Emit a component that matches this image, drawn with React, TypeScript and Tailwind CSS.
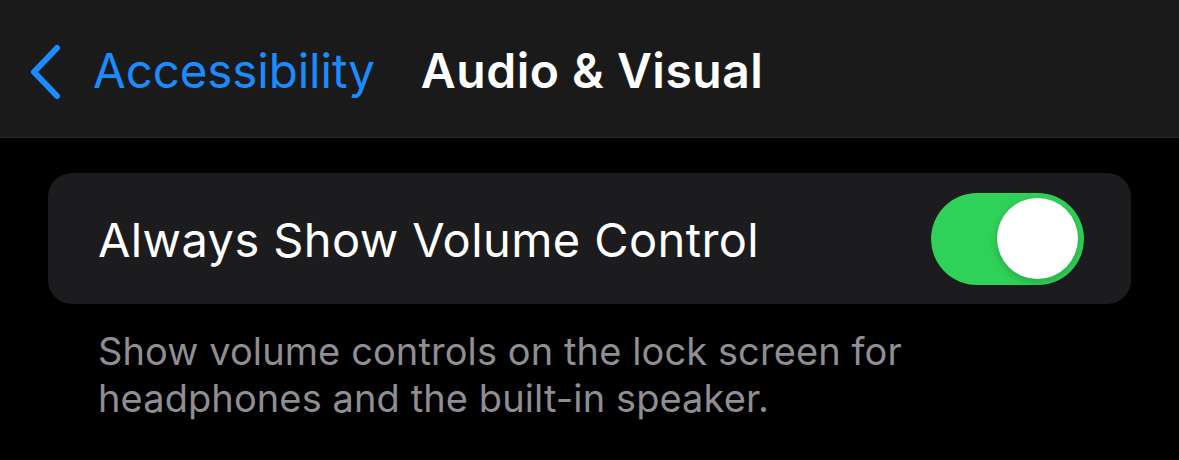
export default function App() {
  return (
    <main
      className="h-[460px] w-[1179px] overflow-hidden bg-black text-white"
      style={{ fontFamily: "Inter, 'Noto Sans', sans-serif" }}
    >
      <header className="flex h-[138px] items-center border-b border-[#2c2c2e] bg-[#1a1a1b] pl-[28px]">
        <svg width="34" height="58" viewBox="0 0 34 58" className="mt-[6px] shrink-0">
          <path
            d="M29 5 L6 29 L29 53"
            fill="none"
            stroke="#1a8cff"
            strokeWidth="6"
            strokeLinecap="round"
            strokeLinejoin="round"
          />
        </svg>
        <span className="ml-[31px] mt-[4px] text-[47.5px] tracking-[-0.1px] text-[#1a8cff]">Accessibility</span>
        <h1 className="ml-[46px] mt-[4px] text-[48px] font-semibold tracking-[0.5px]">Audio &amp; Visual</h1>
      </header>

      <section className="px-[48px] pt-[35px]">
        <div className="flex h-[131px] items-center justify-between rounded-[24px] bg-[#1c1c1e] pl-[50px] pr-[47px]">
          <span className="mt-[4px] text-[47px] tracking-[0.4px]">Always Show Volume Control</span>
          <div className="flex h-[92px] w-[153px] items-center justify-end rounded-full bg-[#30d158] pr-[6px]">
            <div className="size-[81px] rounded-full bg-white shadow-[0_3px_8px_rgba(0,0,0,0.2)]" />
          </div>
        </div>
        <p className="mt-[24px] pl-[50px] text-[38px] leading-[47px] tracking-[0.1px] text-[#8e8e93]">
          Show volume controls on the lock screen for
          <br />
          headphones and the built-in speaker.
        </p>
      </section>
    </main>
  );
}
